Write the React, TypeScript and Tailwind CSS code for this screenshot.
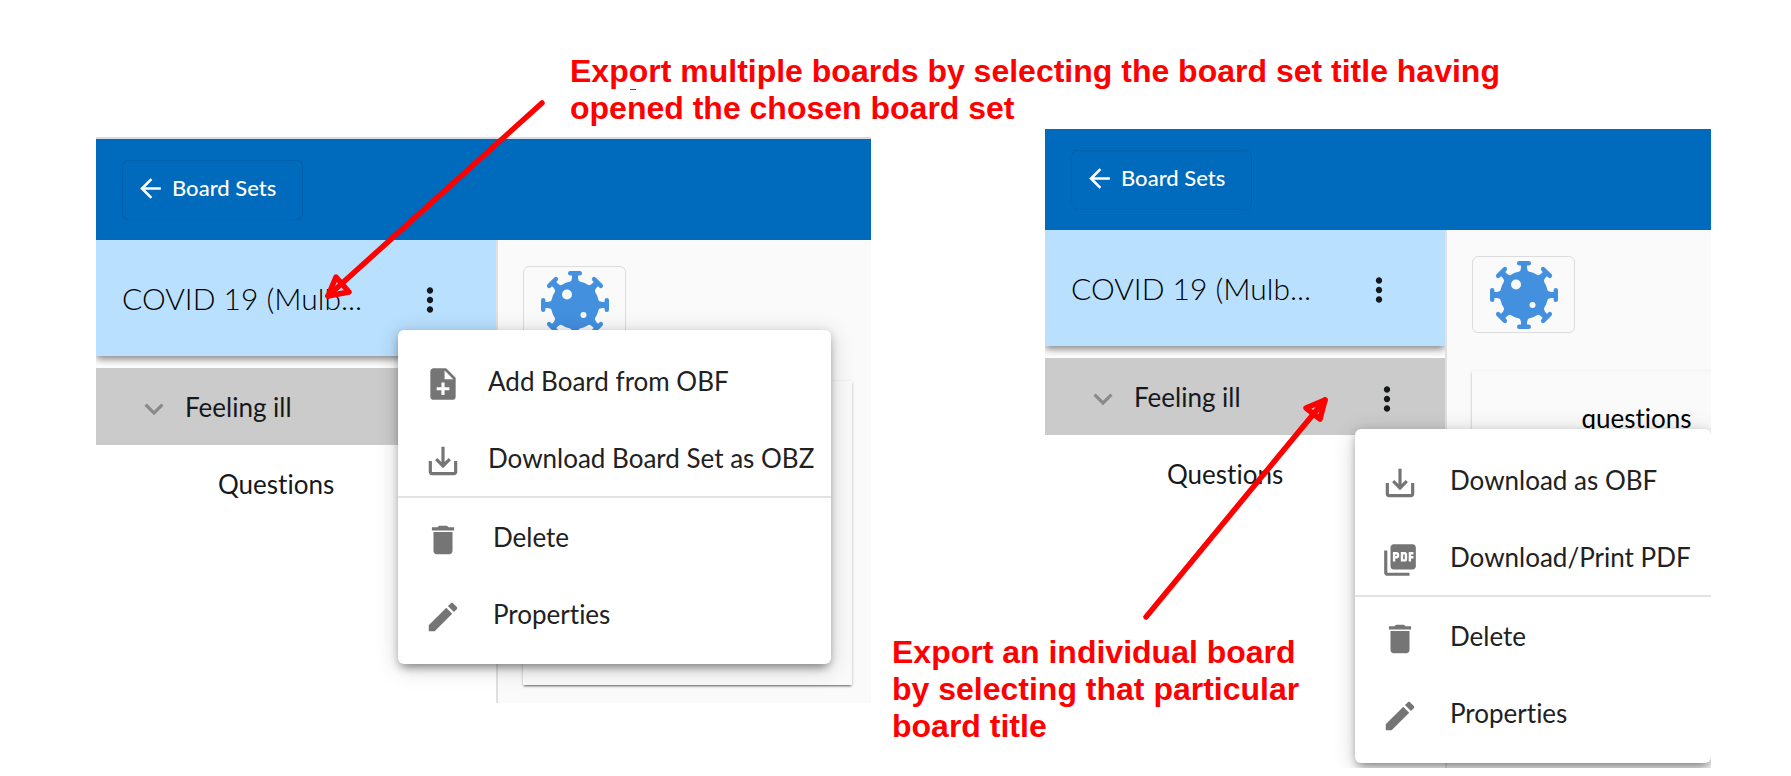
import type { ReactNode } from "react";

type IconName = "noteAdd" | "saveAlt" | "pdf" | "delete" | "edit" | "more" | "expand" | "back";

const iconPaths: Record<IconName, string> = {
  noteAdd:
    "M14 2H6c-1.1 0-1.99.9-1.99 2L4 20c0 1.1.89 2 1.99 2H18c1.1 0 2-.9 2-2V8l-6-6zm2 14h-3v3h-2v-3H8v-2h3v-3h2v3h3v2zm-3-7V3.5L18.5 9H13z",
  saveAlt:
    "M19 12v7H5v-7H3v7c0 1.1.9 2 2 2h14c1.1 0 2-.9 2-2v-7h-2zm-6 .67l2.59-2.58L17 11.5l-5 5-5-5 1.41-1.41L11 12.67V3h2z",
  pdf: "M20 2H8c-1.1 0-2 .9-2 2v12c0 1.1.9 2 2 2h12c1.1 0 2-.9 2-2V4c0-1.1-.9-2-2-2zm-8.5 7.5c0 .83-.67 1.5-1.5 1.5H9v2H7.5V7H10c.83 0 1.5.67 1.5 1.5v1zm5 2c0 .83-.67 1.5-1.5 1.5h-2.5V7H15c.83 0 1.5.67 1.5 1.5v3zm4-3H19v1h1.5V11H19v2h-1.5V7h3v1.5zM9 9.5h1v-1H9v1zM4 6H2v14c0 1.1.9 2 2 2h14v-2H4V6zm10 5.5h1v-3h-1v3z",
  delete: "M6 19c0 1.1.9 2 2 2h8c1.1 0 2-.9 2-2V7H6v12zM19 4h-3.5l-1-1h-5l-1 1H5v2h14V4z",
  edit: "M3 17.25V21h3.75L17.81 9.94l-3.75-3.75L3 17.25zM20.71 7.04c.39-.39.39-1.02 0-1.41l-2.34-2.34c-.39-.39-1.02-.39-1.41 0l-1.83 1.83 3.75 3.75 1.83-1.83z",
  more: "M12 8c1.1 0 2-.9 2-2s-.9-2-2-2-2 .9-2 2 .9 2 2 2zm0 2c-1.1 0-2 .9-2 2s.9 2 2 2 2-.9 2-2-.9-2-2-2zm0 6c-1.1 0-2 .9-2 2s.9 2 2 2 2-.9 2-2-.9-2-2-2z",
  expand: "M16.59 8.59L12 13.17 7.41 8.59 6 10l6 6 6-6z",
  back: "M20 11H7.83l5.59-5.59L12 4l-8 8 8 8 1.41-1.41L7.83 13H20v-2z",
};

function Icon({ name, className }: { name: IconName; className: string }) {
  return (
    <svg viewBox="0 0 24 24" fill="currentColor" aria-hidden="true" className={className}>
      <path d={iconPaths[name]} />
    </svg>
  );
}

function Virus() {
  return (
    <svg viewBox="-34 -34 68 68" aria-hidden="true" className="size-[68px]">
      <g fill="#4390df">
        <circle r="24" />
        {[0, 45, 90, 135, 180, 225, 270, 315].map((angle) => (
          <g key={angle} transform={`rotate(${angle})`}>
            <path d="M-6 -22 Q-3 -24 -3 -27 V-31 H3 V-27 Q3 -24 6 -22 Z" />
            <rect x="-7" y="-34" width="14" height="4.4" rx="2.2" />
          </g>
        ))}
      </g>
      <circle cx="-8" cy="-10.500" r="5" fill="#fafafa" />
      <circle cx="8.500" cy="10" r="3" fill="#fafafa" />
    </svg>
  );
}

interface Action {
  icon: IconName;
  label: string;
}

function MenuItem({ icon, label, wide }: Action & { wide: boolean }) {
  return (
    <li>
      <button type="button" className={`flex h-[77px] w-full items-center pl-[26px] ${wide ? "gap-[31px]" : "gap-[26px]"}`}>
        <Icon name={icon} className="mt-1.5 size-[38px] shrink-0 text-[#757575]" />
        <span className="whitespace-nowrap text-[26px] leading-8">{label}</span>
      </button>
    </li>
  );
}

function Menu({ className, exports, wide }: { className: string; exports: Action[]; wide: boolean }) {
  return (
    <div
      className={`absolute z-10 rounded-md bg-white py-3 text-[#212121] shadow-[0_8px_10px_-5px_rgba(0,0,0,0.25),0_4px_22px_2px_rgba(0,0,0,0.14),0_3px_8px_rgba(0,0,0,0.22)] ${className}`}
    >
      <ul className="border-b-2 border-[#e2e2e2]">
        {exports.map((a) => (
          <MenuItem key={a.label} {...a} wide={wide} />
        ))}
      </ul>
      <ul>
        <MenuItem icon="delete" label="Delete" wide />
        <MenuItem icon="edit" label="Properties" wide />
      </ul>
    </div>
  );
}

function Panel({ className, children }: { className: string; children: ReactNode }) {
  return (
    <section className={`relative flex flex-col overflow-hidden bg-white ${className}`}>
      <header className="relative z-[1] flex items-center bg-[#006abc] px-[26px] pb-5 pt-[21px]">
        <button
          type="button"
          className="flex h-[60px] w-[181px] items-center gap-1.5 rounded-md border border-[#0060ab] pb-1 pl-3 font-medium text-white"
        >
          <Icon name="back" className="size-[31px]" />
          <span className="text-[22px] leading-7">Board Sets</span>
        </button>
      </header>
      <div className="flex grow">
        <nav className="w-[400px] shrink-0 overflow-hidden">
          <div className="flex h-[116px] items-center bg-[#b9e0ff] pl-[26px] pr-[47px] text-black shadow-[0_3px_8px_rgba(0,0,0,0.5)]">
            <h2 className="grow truncate text-[30px] font-light leading-9">COVID 19 (Mulb...</h2>
            <button type="button" aria-label="Board set options" className="mt-1">
              <Icon name="more" className="size-[38px] text-[#16191c]" />
            </button>
          </div>
          <ul className="pt-3 text-[26px] leading-8 text-[#16191c]">
            <li className="relative flex h-[77px] items-center bg-[#cbcbcb] pl-[39px] pr-[39px]">
              <Icon name="expand" className="mt-1 size-[38px] text-[#8a8a8a]" />
              <span className="grow pl-3">Feeling ill</span>
              <button type="button" aria-label="Board options" className="mt-1">
                <Icon name="more" className="size-[38px]" />
              </button>
            </li>
            <li className="flex h-[77px] items-center pl-[122px]">Questions</li>
          </ul>
        </nav>
        <main className="min-w-0 grow border-l-2 border-[#e0e0e0] bg-[#fafafa] pl-[25px] pt-[26px]">
          <div className="flex h-[77px] w-[103px] items-center justify-center rounded-md border border-[#dcdcdc]">
            <Virus />
          </div>
          <article className="mt-[38px] h-[304px] w-[329px] pt-[31px] text-center text-[26px] leading-8 text-black shadow-[0_2px_2px_-1px_rgba(0,0,0,0.5),0_1px_3px_rgba(0,0,0,0.2)]">
            questions
          </article>
        </main>
      </div>
      {children}
    </section>
  );
}

function Note({ className, children }: { className: string; children: ReactNode }) {
  return (
    <p
      className={`absolute z-20 whitespace-nowrap font-['Liberation_Sans',Arial,sans-serif] text-[32px] font-bold leading-[37px] text-[#ff0000] ${className}`}
    >
      {children}
    </p>
  );
}

export default function App() {
  return (
    <div className="flex min-h-screen items-start bg-white pb-2 pl-24 pr-20 font-[Lato,sans-serif] [font-variant-ligatures:none]">
      <div className="relative mt-[137px] min-w-0 flex-[775_1_0%]">
        <Panel className="h-[566px] border-t-2 border-[#d5dde4]">
          <Menu
            className="left-[302px] top-[191px] w-[433px]"
            wide={false}
            exports={[
              { icon: "noteAdd", label: "Add Board from OBF" },
              { icon: "saveAlt", label: "Download Board Set as OBZ" },
            ]}
          />
        </Panel>
        <Note className="-top-[84px] left-[474px]">
          Export multiple boards by selecting the board set title having
          <br />
          opened the chosen board set
        </Note>
        <svg
          viewBox="0 0 320 220"
          aria-hidden="true"
          className="pointer-events-none absolute -top-[51px] left-[222px] z-20 h-[220px] w-[320px]"
          fill="none"
          stroke="#ff0000"
          strokeWidth="5.5"
          strokeLinecap="round"
          strokeLinejoin="round"
        >
          <path d="M224 17 L10 210" />
          <path d="M10 210 L18 191 L31 206 Z" />
          <path d="M312 3.500 H318" strokeWidth="1" strokeLinecap="butt" />
        </svg>
      </div>
      <div className="relative ml-[174px] mt-[129px] min-w-0 flex-[666_1_0%]">
        <Panel className="h-[639px]">
          <Menu
            className="left-[310px] top-[300px] w-[356px]"
            wide
            exports={[
              { icon: "saveAlt", label: "Download as OBF" },
              { icon: "pdf", label: "Download/Print PDF" },
            ]}
          />
        </Panel>
        <Note className="-left-[153px] top-[505px]">
          Export an individual board
          <br />
          by selecting that particular
          <br />
          board title
        </Note>
        <svg
          viewBox="0 0 200 240"
          aria-hidden="true"
          className="pointer-events-none absolute left-[95px] top-[261px] z-20 h-[240px] w-[200px]"
          fill="none"
          stroke="#ff0000"
          strokeWidth="5.5"
          strokeLinecap="round"
          strokeLinejoin="round"
        >
          <path d="M6 227 L185 10" />
          <path d="M185 10 L166 18 L180 29 Z" />
        </svg>
      </div>
    </div>
  );
}
